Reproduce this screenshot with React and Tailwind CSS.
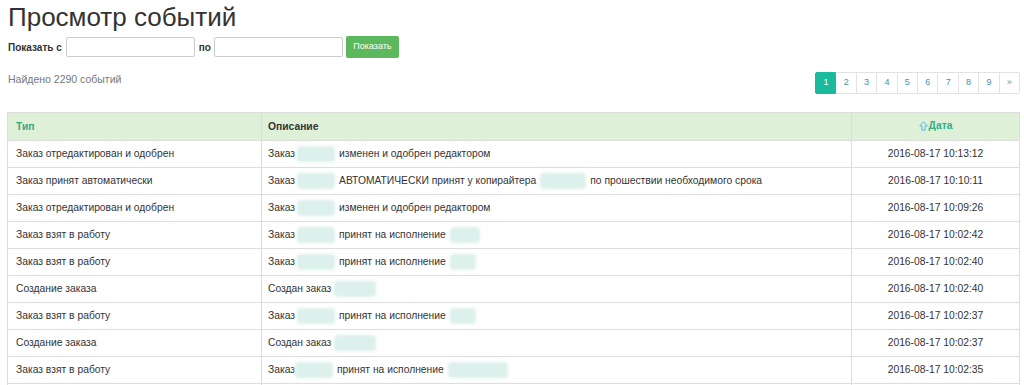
import React from "react";

const Blur = ({ w, ml = 2, mr = 4 }) => (
  <span
    className="inline-block h-[16px] align-middle bg-[#dcf0ec] blur-[1.5px] rounded-sm"
    style={{ width: w, marginLeft: ml, marginRight: mr }}
  />
);

const rows = [
  ["Заказ отредактирован и одобрен", <>Заказ<Blur w={38} />изменен и одобрен редактором</>, "2016-08-17 10:13:12"],
  ["Заказ принят автоматически", <>Заказ<Blur w={38} />АВТОМАТИЧЕСКИ принят у копирайтера<Blur w={46} ml={4} />по прошествии необходимого срока</>, "2016-08-17 10:10:11"],
  ["Заказ отредактирован и одобрен", <>Заказ<Blur w={38} />изменен и одобрен редактором</>, "2016-08-17 10:09:26"],
  ["Заказ взят в работу", <>Заказ<Blur w={38} />принят на исполнение<Blur w={30} ml={4} /></>, "2016-08-17 10:02:42"],
  ["Заказ взят в работу", <>Заказ<Blur w={38} />принят на исполнение<Blur w={26} ml={4} /></>, "2016-08-17 10:02:40"],
  ["Создание заказа", <>Создан заказ<Blur w={42} ml={3} /></>, "2016-08-17 10:02:40"],
  ["Заказ взят в работу", <>Заказ<Blur w={38} />принят на исполнение<Blur w={26} ml={4} /></>, "2016-08-17 10:02:37"],
  ["Создание заказа", <>Создан заказ<Blur w={42} ml={3} /></>, "2016-08-17 10:02:37"],
  ["Заказ взят в работу", <>Заказ<Blur w={38} ml={0} />принят на исполнение<Blur w={60} ml={4} /></>, "2016-08-17 10:02:35"],
  ["", "", ""],
];

export default function App() {
  return (
    <div className="bg-white w-[1024px] h-[385px] overflow-hidden text-[#333] font-['Liberation_Sans',Arial,sans-serif]">
      <div className="px-[8px]">
        <h1 className="text-[26px] leading-[30px] pt-[2px] text-[#333]">Просмотр событий</h1>
        <div className="flex items-center mt-[4px] h-[22px]">
          <span className="text-[10px] font-bold mr-[4px]">Показать с</span>
          <input className="w-[129px] h-[20px] border border-[#ccc] rounded-[2px] mr-[4px]" />
          <span className="text-[10px] font-bold mr-[3px]">по</span>
          <input className="w-[129px] h-[20px] border border-[#ccc] rounded-[2px] mr-[3px]" />
          <button className="w-[53px] h-[22px] bg-[#5cb85c] text-white text-[9px] rounded-[2px]">Показать</button>
        </div>
        <div className="flex justify-between items-start mt-[13px]">
          <div className="text-[10.5px] text-[#777] leading-[14px] mt-[1px]">Найдено 2290 событий</div>
          <div className="flex mr-[-4px] mt-[1px]">
            {["1", "2", "3", "4", "5", "6", "7", "8", "9", "»"].map((n, i) => (
              <div
                key={n}
                className={
                  i === 0
                    ? "w-[21px] h-[22px] flex items-center justify-center text-[9px] bg-[#1abb9c] text-white rounded-l-[2px] border border-[#1abb9c]"
                    : "w-[20.4px] h-[22px] flex items-center justify-center text-[9px] text-[#4d8fa6] border border-l-0 border-[#e3e3e3] last:rounded-r-[2px]"
                }
              >
                {n}
              </div>
            ))}
          </div>
        </div>
        <table className="mt-[18px] w-[1013px] ml-[-1px] border-collapse text-[10.3px] table-fixed">
          <thead>
            <tr className="bg-[#dff0d8] h-[28px]">
              <th className="w-[254px] border border-[#ddd] text-left font-bold px-[8px] text-[#35a882]">Тип</th>
              <th className="w-[590px] border border-[#ddd] text-left font-bold px-[6px] text-[#333]">Описание</th>
              <th className="border border-[#ddd] font-bold px-[6px] text-[#2fae88]">
                <span className="inline-flex items-center">
                  <svg width="9" height="10" viewBox="0 0 9 10" className="mr-[1px]">
                    <path d="M4.5 0.8 L8.3 5 H6 V9.2 H3 V5 H0.7 Z" fill="none" stroke="#5fb8d8" strokeWidth="1" strokeLinejoin="round" />
                  </svg>
                  Дата
                </span>
              </th>
            </tr>
          </thead>
          <tbody>
            {rows.map((r, i) => (
              <tr key={i} className="h-[27px]">
                <td className="border border-[#ddd] px-[8px] whitespace-nowrap">{r[0]}</td>
                <td className="border border-[#ddd] px-[6px] whitespace-nowrap">{r[1]}</td>
                <td className="border border-[#ddd] px-[6px] text-center whitespace-nowrap">{r[2]}</td>
              </tr>
            ))}
          </tbody>
        </table>
      </div>
    </div>
  );
}
